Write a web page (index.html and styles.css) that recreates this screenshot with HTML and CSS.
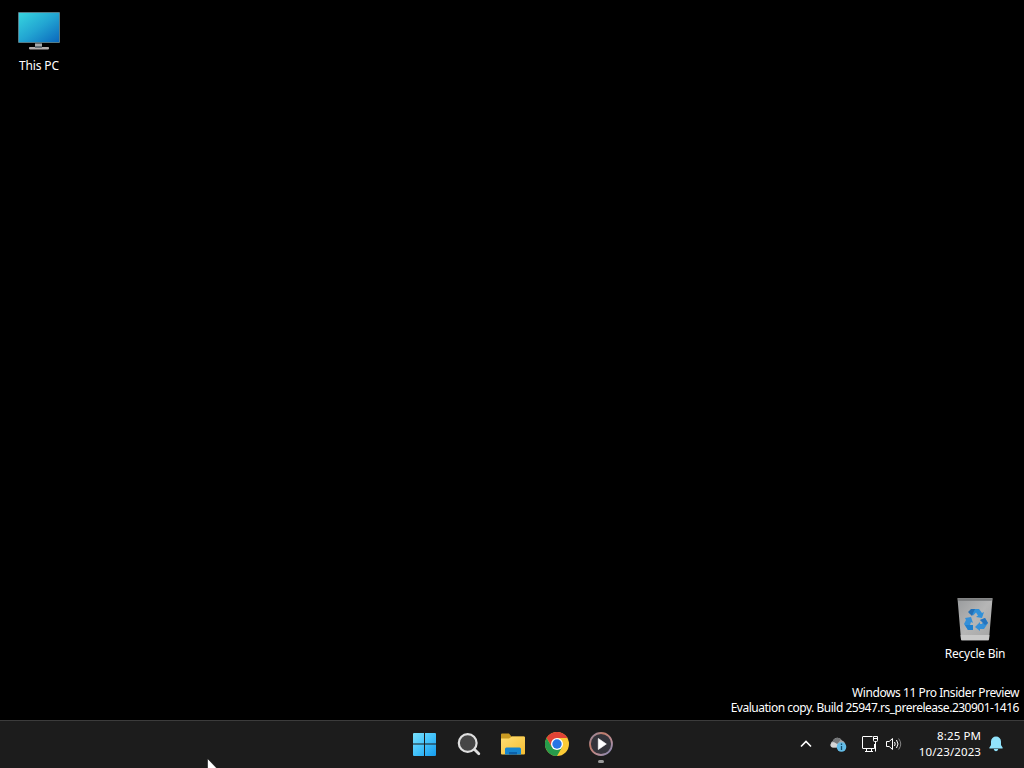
FILE: index.html
```html
<!DOCTYPE html>
<html lang="en">
<head>
<meta charset="utf-8">
<title>Desktop</title>
<link rel="stylesheet" href="styles.css">
</head>
<body>
<main class="desktop">
  <div class="shortcut this-pc">
    <svg width="44" height="42" viewBox="0 0 44 42">
      <defs>
        <linearGradient id="screen" x1="0" y1="0" x2="1" y2="1"><stop offset="0" stop-color="#36d5df"/><stop offset=".5" stop-color="#22a5d2"/><stop offset="1" stop-color="#0b68bd"/></linearGradient>
      </defs>
      <path d="M18 32h7v5h-7z" fill="#a5a9ab"/>
      <path d="M18 33h7v1h-7z" fill="#62686b"/>
      <rect x="12" y="37" width="20" height="2.400" rx=".8" fill="#b3aead"/>
      <path d="M18 36h7v2h-7z" fill="#656e73"/>
      <rect x="1" y="2" width="42" height="31" rx="1" fill="#567c88"/>
      <rect x="2" y="3" width="40" height="29" fill="url(#screen)"/>
    </svg>
    <span class="label pc-label">This PC</span>
  </div>
  <div class="corner">
    <div class="shortcut bin">
      <svg width="44" height="46" viewBox="0 0 44 46">
        <defs>
          <linearGradient id="bin" x1="0" y1="0" x2="1" y2="1"><stop offset="0" stop-color="#999b9d"/><stop offset=".5" stop-color="#b6b6b6"/><stop offset="1" stop-color="#a3a3a3"/></linearGradient>
        </defs>
        <path d="M4.500 2.500h35l-3.500 41q0 1-1 1H9q-1 0-1-1z" fill="url(#bin)"/>
        <path d="M5 3h34l-.4 1.800H5.400z" fill="#747677"/>
        <path d="M4.500 2.700h35" stroke="#a2a2a2" stroke-width=".8"/>
        <path d="M7.600 39h28.800l-.4 4q0 1-1 1H9q-1 0-1-1z" fill="#c9c9c9"/>
        <path d="M16 17l3-4h7l3 4 2-1-2 6-6-1 2-1.500-2-3-3 3z" fill="#2f90d9"/>
        <path d="M15 16l3-3h4l-2 4-1 3z" fill="#236fb5"/>
        <path d="M12 22l6-1 2 6-2-1-1 3h3v5h-5l-4-6 2-4z" fill="#3590d8"/>
        <path d="M12 29h8v5h-5z" fill="#2080ce"/>
        <path d="M27 24l5-2 3 5-4 6h-4v2l-5-4 5-5v2h2l1-2z" fill="#3590d8"/>
        <path d="M27 24l5-2 3 5-3 2z" fill="#2674be"/>
      </svg>
      <span class="label bin-label">Recycle Bin</span>
    </div>
    <div class="watermark">
      <span class="edition">Windows 11 Pro Insider Preview</span>
      <span class="build">Evaluation copy. Build 25947.rs_prerelease.230901-1416</span>
    </div>
  </div>
</main>
<footer class="taskbar">
  <nav class="apps">
    <div class="app">
      <svg width="24" height="24" viewBox="0 0 24 24">
        <defs><linearGradient id="win" gradientUnits="userSpaceOnUse" x1="0" y1="0" x2="24" y2="24"><stop offset="0" stop-color="#7be2fc"/><stop offset=".5" stop-color="#43c2fb"/><stop offset="1" stop-color="#1299ed"/></linearGradient></defs>
        <path fill="url(#win)" d="M1 1H11V11.500H0V2q0-1 1-1zM12 1H22q1 0 1 1v9.500H12zM0 12.500h11V24H1q-1 0-1-1zM12 12.500H23V23q0 1-1 1H12z"/>
      </svg>
    </div>
    <div class="app">
      <svg width="24" height="24" viewBox="0 0 24 24">
        <path d="M17.500 17.500l4.300 4.300" stroke="#dedede" stroke-width="2.800" stroke-linecap="round"/>
        <circle cx="10.700" cy="11" r="8.900" fill="#454545" stroke="#dfdfdf" stroke-width="2.200"/>
      </svg>
    </div>
    <div class="app">
      <svg width="26" height="24" viewBox="0 0 26 24">
        <defs><linearGradient id="folder" x1="0" y1="0" x2="1" y2="1"><stop offset="0" stop-color="#ffdf74"/><stop offset="1" stop-color="#f5bd32"/></linearGradient></defs>
        <path d="M1 2.500q0-1 1-1h7l2.500 3h12q1 0 1 1v7H1z" fill="#c99a22"/>
        <path d="M1 6.500h8l3-2h12q1 0 1 1v16q0 1-1 1H2q-1 0-1-1z" fill="url(#folder)"/>
        <path d="M5 22.500v-5.500q0-1.500 1.500-1.500h13Q21 15.500 21 17v5.500z" fill="#1685cf"/>
        <path d="M9 22.500v-2.500h8v2.500z" fill="#0c61aa"/>
      </svg>
    </div>
    <div class="app">
      <svg width="24" height="24" viewBox="0 0 24 24">
        <circle cx="12" cy="12" r="12" fill="#fccb36"/>
        <path d="M12 6H22.400A12 12 0 0 0 1.600 6L6.800 15z" fill="#e04336"/>
        <path d="M1.600 6A12 12 0 0 0 12 24L17.200 15 12 17 6.800 15z" fill="#279b4b"/>
        <circle cx="12" cy="12" r="6" fill="#fff"/>
        <circle cx="12" cy="12" r="4.700" fill="#2775e5"/>
      </svg>
    </div>
    <div class="app running">
      <svg width="24" height="24" viewBox="0 0 24 24">
        <defs><linearGradient id="ring" x1="0" y1="0" x2="1" y2="1"><stop offset="0" stop-color="#8290ba"/><stop offset=".3" stop-color="#c17b69"/><stop offset=".65" stop-color="#b98e96"/><stop offset="1" stop-color="#7784b7"/></linearGradient></defs>
        <circle cx="12" cy="12" r="11" fill="#34343b" stroke="url(#ring)" stroke-width="1.800"/>
        <path d="M9.300 6.500v11l8-5.500z" fill="#fff" stroke="#fff" stroke-linejoin="round" stroke-width=".7"/>
      </svg>
    </div>
  </nav>
  <div class="tray">
    <svg class="chevron" width="14" height="12" viewBox="0 0 14 12"><path d="M2 8.500l5-5 5 5" fill="none" stroke="#fff" stroke-width="1.600"/></svg>
    <svg class="cloud" width="18" height="16" viewBox="0 0 18 16">
      <path d="M4 11.500a3.500 3.500 0 0 1-.2-6.500A5 5 0 0 1 13 4.500q3.500 1 3 5l-5 2z" fill="#a5a7a9"/>
      <path d="M3.500 5.500A5 5 0 0 1 12 3.500L8 8z" fill="#747678"/>
      <path d="M3 11.500q-3-2-.5-4.500 2-1.500 4 0l3 2-2 2.500z" fill="#d5d5d5"/>
      <circle cx="12.500" cy="11" r="4.800" fill="#63bce7"/>
      <path d="M12.500 10v4M12.500 7.500v1.400" stroke="#124b6b" stroke-width="1.300"/>
    </svg>
    <svg class="network" width="18" height="18" viewBox="0 0 18 18" fill="none" stroke="#fff">
      <path d="M11.500 1.500H2q-.5 0-.5.500v11q0 .5.500.5h11.500V9M5.500 13.500v3M10.500 13.500v3M4 16.500h8"/>
      <path d="M12.500 1.500h4v4q0 1-1 1h-2q-1 0-1-1zM12.500 3.500h4M14.500 6.500v10"/>
    </svg>
    <svg class="volume" width="18" height="16" viewBox="0 0 18 16" fill="none" stroke="#fff">
      <path d="M1.500 5.500h2.700l3.300-3v11l-3.300-3H1.500z" stroke-linejoin="round"/>
      <path d="M9.500 6q1.400 2 0 4M11.500 4q3 4 0 8"/>
      <path d="M13.600 2.500q4.300 5.500 0 11" stroke="#858585"/>
    </svg>
    <div class="clock"><span class="time">8:25 PM</span><span class="date">10/23/2023</span></div>
    <svg class="bell" width="16" height="18" viewBox="0 0 16 18"><path d="M8 1.500a5 5 0 0 0-5 5V10l-1.700 2.800q-.3.700.5.700H14.200q.8 0 .5-.7L13 10V6.500a5 5 0 0 0-5-5zM5.700 14h4.600q-.7 2.300-2.300 2.300t-2.300-2.300z" fill="#91e3fc"/></svg>
  </div>
</footer>
<svg class="cursor" width="12" height="19" viewBox="0 0 12 19"><path d="M.5.500v16l4-4 2.500 6 2-1-2.500-5.500h5z" fill="#fff" stroke="#000" stroke-width=".5"/></svg>
</body>
</html>
```
FILE: styles.css
```css
* { box-sizing: border-box; }
body {
  margin: 0;
  width: 1024px;
  height: 768px;
  overflow: hidden;
  display: flex;
  flex-direction: column;
  background: #000;
  color: #fff;
  font: 12px/15px "Noto Sans", sans-serif;
  position: relative;
}
svg { display: block; flex: none; }
span { white-space: nowrap; }
.desktop {
  flex: 1;
  display: flex;
  flex-direction: column;
  justify-content: space-between;
}
.shortcut {
  width: 78px;
  display: flex;
  flex-direction: column;
  align-items: center;
}
.this-pc { padding-top: 10px; gap: 6px; }
.corner { display: flex; flex-direction: column; align-items: flex-end; }
.bin { width: 98px; gap: 4px; }
.watermark {
  display: flex;
  flex-direction: column;
  align-items: flex-end;
  padding: 24px 5px 5px;
}
.pc-label { letter-spacing: -.15px; }
.bin-label { letter-spacing: -.25px; }
.edition { letter-spacing: -.43px; }
.build { letter-spacing: -.49px; }
.taskbar {
  height: 48px;
  flex: none;
  display: grid;
  grid-template-columns: 403px 220px 1fr;
  background: #1c1c1c;
  border-top: 1px solid #3b3b3b;
  padding-bottom: 2px;
}
.apps { grid-column: 2; display: flex; }
.app {
  width: 44px;
  display: flex;
  flex-direction: column;
  align-items: center;
  justify-content: center;
}
.running { justify-content: flex-start; padding-top: 11px; }
.running::after {
  content: "";
  width: 6px;
  height: 3px;
  margin-top: 4px;
  border-radius: 2px;
  background: #9a9a9a;
}
.tray {
  display: flex;
  align-items: center;
  justify-content: flex-end;
  padding-right: 20px;
}
.chevron { margin-right: 16px; }
.cloud { margin-right: 14px; }
.network { margin-right: 6px; }
.volume { margin-right: 10px; }
.clock {
  width: 68px;
  display: flex;
  flex-direction: column;
  align-items: flex-end;
  font-size: 11.500px;
  line-height: 16px;
  margin-right: 7px;
}
.time, .date { letter-spacing: .1px; }
.cursor { position: absolute; left: 207px; top: 758px; }
```
